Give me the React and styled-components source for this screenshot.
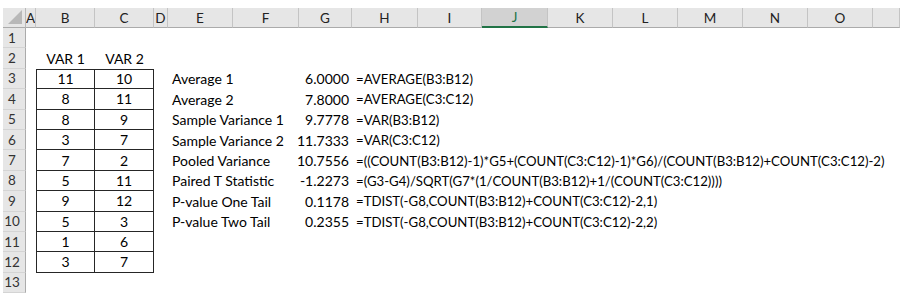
import React from "react";
import styled, { createGlobalStyle, css } from "styled-components";

const Global = createGlobalStyle`
  html, body { margin: 0; padding: 0; background: #ffffff; }
  body { font-family: Lato, "Liberation Sans", sans-serif; }
`;

const COLS = ["A", "B", "C", "D", "E", "F", "G", "H", "I", "J", "K", "L", "M", "N", "O", "P"];
const WIDTHS = [10, 59, 59, 14, 65, 66, 53, 66, 64, 66, 65, 65, 65, 65, 65, 27];

const Page = styled.div`
  padding: 8px 0 0 3px;
`;

const Sheet = styled.div`
  display: grid;
  grid-template-columns: 23px ${WIDTHS.map((w) => `${w}px`).join(" ")};
  grid-template-rows: 20px repeat(13, 20.4px);
  font-size: 14px;
  color: #000;
`;

const Corner = styled.div`
  position: relative;
  background: #e6e6e6;
  border-right: 1px solid #b9b9b9;
  border-bottom: 1px solid #ababab;
  box-sizing: border-box;
`;

const CornerTriangle = styled.svg`
  position: absolute;
  right: 3px;
  bottom: 3px;
`;

const ColHeader = styled.div`
  display: flex;
  align-items: center;
  justify-content: center;
  overflow: hidden;
  box-sizing: border-box;
  background: ${(p) => (p.$selected ? "#d2d2d2" : "#e6e6e6")};
  border-right: 1px solid #c4c4c4;
  border-bottom: ${(p) => (p.$selected ? "2px solid #217346" : "1px solid #ababab")};
  color: ${(p) => (p.$selected ? "#217346" : "#222")};
  font-size: 13.5px;
`;

const RowHeader = styled.div`
  display: flex;
  align-items: center;
  justify-content: center;
  padding-right: 4px;
  box-sizing: border-box;
  background: #e6e6e6;
  border-right: 1px solid #ababab;
  border-bottom: 1px solid #d4d4d4;
  color: #333;
  font-size: 13.5px;
`;

const Cell = styled.div`
  display: flex;
  align-items: center;
  box-sizing: border-box;
  white-space: nowrap;
  min-width: 0;
  justify-content: ${(p) =>
    p.$align === "right" ? "flex-end" : p.$align === "center" ? "center" : "flex-start"};
  padding: ${(p) => (p.$align === "right" ? "0 3px 0 0" : p.$align === "center" ? "0" : "0 0 0 4px")};
  ${(p) => p.$span && css`grid-column: span ${p.$span};`}
  ${(p) => p.$formula && css`font-size: 13.2px;`}
  ${(p) =>
    p.$boxed &&
    css`
      border-right: 1px solid #262626;
      border-bottom: 1px solid #262626;
      ${p.$first && "border-left: 1px solid #262626;"}
      ${p.$top && "border-top: 1px solid #262626;"}
    `}
`;

const var1 = [11, 8, 8, 3, 7, 5, 9, 5, 1, 3];
const var2 = [10, 11, 9, 7, 2, 11, 12, 3, 6, 7];

const stats = [
  ["Average 1", "6.0000", "=AVERAGE(B3:B12)"],
  ["Average 2", "7.8000", "=AVERAGE(C3:C12)"],
  ["Sample Variance 1", "9.7778", "=VAR(B3:B12)"],
  ["Sample Variance 2", "11.7333", "=VAR(C3:C12)"],
  ["Pooled Variance", "10.7556", "=((COUNT(B3:B12)-1)*G5+(COUNT(C3:C12)-1)*G6)/(COUNT(B3:B12)+COUNT(C3:C12)-2)"],
  ["Paired T Statistic", "-1.2273", "=(G3-G4)/SQRT(G7*(1/COUNT(B3:B12)+1/(COUNT(C3:C12))))"],
  ["P-value One Tail", "0.1178", "=TDIST(-G8,COUNT(B3:B12)+COUNT(C3:C12)-2,1)"],
  ["P-value Two Tail", "0.2355", "=TDIST(-G8,COUNT(B3:B12)+COUNT(C3:C12)-2,2)"],
];

function SheetRow({ n }) {
  const dataIdx = n - 3;
  const hasData = dataIdx >= 0 && dataIdx < 10;
  const stat = n >= 3 && n <= 10 ? stats[n - 3] : null;
  return (
    <>
      <RowHeader>{n}</RowHeader>
      <Cell />
      {n === 2 ? (
        <>
          <Cell $align="center">VAR 1</Cell>
          <Cell $align="center">VAR 2</Cell>
        </>
      ) : hasData ? (
        <>
          <Cell $align="center" $boxed $first $top={n === 3}>{var1[dataIdx]}</Cell>
          <Cell $align="center" $boxed $top={n === 3}>{var2[dataIdx]}</Cell>
        </>
      ) : (
        <>
          <Cell />
          <Cell />
        </>
      )}
      <Cell />
      <Cell>{stat ? stat[0] : ""}</Cell>
      <Cell />
      <Cell $align="right">{stat ? stat[1] : ""}</Cell>
      <Cell $span={9} $formula>{stat ? stat[2] : ""}</Cell>
    </>
  );
}

export default function App() {
  return (
    <Page>
      <Global />
      <Sheet>
        <Corner>
          <CornerTriangle width="14" height="14" viewBox="0 0 14 14">
            <polygon points="14,0 14,14 0,14" fill="#b8b8b8" />
          </CornerTriangle>
        </Corner>
        {COLS.map((c) => (
          <ColHeader key={c} $selected={c === "J"}>
            {c === "P" ? "" : c}
          </ColHeader>
        ))}
        {Array.from({ length: 13 }, (_, i) => (
          <SheetRow key={i} n={i + 1} />
        ))}
      </Sheet>
    </Page>
  );
}
